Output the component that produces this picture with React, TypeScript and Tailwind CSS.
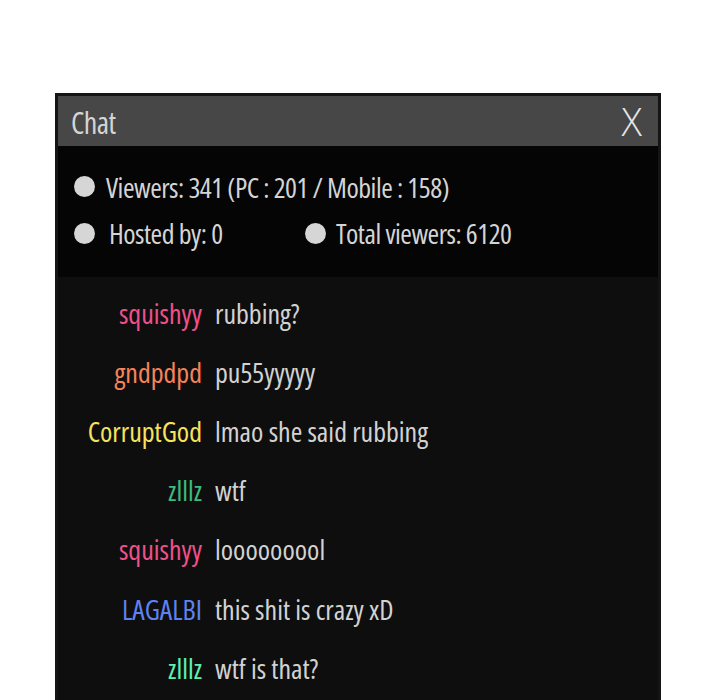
const font = { fontFamily: "'Open Sans', 'Liberation Sans', sans-serif", fontStretch: "75%" } as const;

const messages = [
  { name: "squishyy", color: "text-[#f0508a]", text: "rubbing?" },
  { name: "gndpdpd", color: "text-[#f5845a]", text: "pu55yyyyy" },
  { name: "CorruptGod", color: "text-[#f7e25c]", text: "lmao she said rubbing" },
  { name: "zlllz", color: "text-[#3fb97c]", text: "wtf" },
  { name: "squishyy", color: "text-[#f0508a]", text: "looooooool" },
  { name: "LAGALBI", color: "text-[#5f82f0]", text: "this shit is crazy xD" },
  { name: "zlllz", color: "text-[#5ef0ac]", text: "wtf is that?" },
];

function Dot() {
  return <span className="inline-block w-[21px] h-[21px] rounded-full bg-[#d6d6d6] shrink-0" />;
}

export default function App() {
  return (
    <div className="bg-white w-[720px] h-[700px] overflow-hidden" style={font}>
      <div className="ml-[55px] mt-[93px] w-[606px] h-[620px] border-[3px] border-[#151515] flex flex-col bg-[#0e0e0e]">
        <div className="h-[50px] bg-[#474747] flex items-center justify-between pl-[13px] pr-[16px] shrink-0">
          <span className="text-[30px] text-[#d4d4d4] tracking-[-0.5px] leading-none pt-[3px]">Chat</span>
          <span className="text-[38px] text-[#e6e6e6] leading-none" style={{ fontStretch: "100%", fontFamily: "'Open Sans', sans-serif", fontWeight: 300 }}>X</span>
        </div>
        <div className="bg-[#050505] pt-[17px] pb-[21px] pl-[16px] text-[#d4d4d4] text-[28px] tracking-[-0.5px] leading-none shrink-0">
          <div className="h-[47px] flex items-center">
            <Dot />
            <span className="ml-[11px] whitespace-nowrap">Viewers: 341 (PC : 201 / Mobile : 158)</span>
          </div>
          <div className="h-[46px] flex items-center">
            <div className="w-[231px] flex items-center">
              <Dot />
              <span className="ml-[14px] whitespace-nowrap">Hosted by: 0</span>
            </div>
            <Dot />
            <span className="ml-[10px] whitespace-nowrap">Total viewers: 6120</span>
          </div>
        </div>
        <div className="pt-[6px] flex-1 bg-[#0e0e0e]">
          {messages.map((m, i) => (
            <div key={i} className="h-[59.2px] flex items-center text-[28px] leading-none">
              <span className={`w-[144px] text-right whitespace-nowrap ${m.color}`}>{m.name}</span>
              <span className="ml-[13px] text-[#d2d2d2] whitespace-nowrap">{m.text}</span>
            </div>
          ))}
        </div>
      </div>
    </div>
  );
}
